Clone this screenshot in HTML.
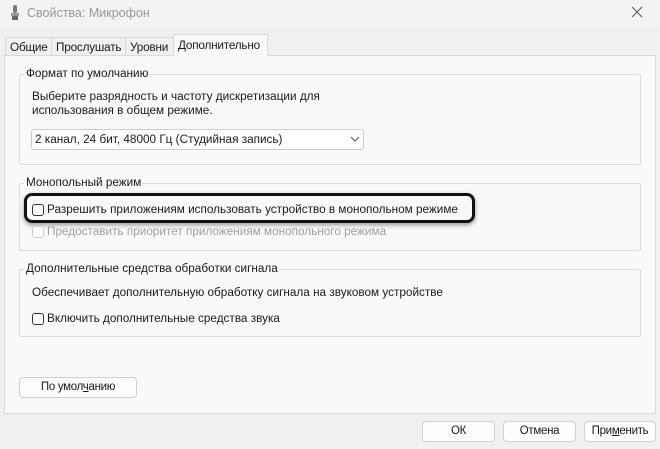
<!DOCTYPE html>
<html><head><meta charset="utf-8"><style>
*{box-sizing:border-box;margin:0;padding:0}
body{width:660px;height:449px;background:#f0f0f0;font-family:"Liberation Sans","DejaVu Sans",sans-serif;font-size:11.75px;color:#1a1a1a;position:relative;overflow:hidden}
.a{position:absolute;white-space:nowrap}
.title{left:0;top:0;width:660px;height:28px;background:#f3f3f3}
.tab{position:absolute;top:37px;height:19px;border:1px solid #d9d9d9;border-bottom:none;background:#f0f0f0;padding:3px 0 0 4px;letter-spacing:-0.2px;overflow:hidden}
.panel{left:4px;top:55px;width:652px;height:359px;background:#f9f9f9;border:1px solid #d9d9d9}
.grp{position:absolute;border:1px solid #dcdcdc;border-radius:2px}
.lg{position:absolute;top:-8px;left:4px;background:#f9f9f9;padding:0 2px}
.cb{position:absolute;width:12px;height:12px;border:1px solid #333;border-radius:3px;background:#fff}
.btn{position:absolute;height:21px;background:#fdfdfd;border:1px solid #d0d0d0;border-radius:4px;text-align:center;line-height:19px;font-size:11.5px;letter-spacing:-0.3px}
</style></head><body>
<div class="a title"></div>
<svg class="a" style="left:10px;top:5px" width="10" height="16"><rect x="3" y="0" width="4" height="8" rx="2" fill="#777"/><rect x="1" y="8" width="8" height="3" fill="#999"/><rect x="2" y="11" width="6" height="4" fill="#666"/></svg>
<div class="a" style="left:27px;top:6px;color:#999;font-size:12.5px">Свойства: Микрофон</div>
<svg class="a" style="left:631px;top:6px" width="12" height="12"><path d="M1 1L11 11M11 1L1 11" stroke="#555" stroke-width="1"/></svg>
<div class="tab" style="left:5px;width:47px">Общие</div>
<div class="tab" style="left:51px;width:75px">Прослушать</div>
<div class="tab" style="left:125px;width:49px">Уровни</div>
<div class="a panel"></div>
<div class="tab" style="left:173px;top:34px;height:23px;width:95px;background:#f9f9f9;padding-top:4px">Дополнительно</div>

<div class="grp" style="left:19px;top:74px;width:622px;height:91px"><span class="lg">Формат по умолчанию</span></div>
<div class="a" style="left:32px;top:90px;line-height:14px">Выберите разрядность и частоту дискретизации для<br>использования в общем режиме.</div>
<div class="a" style="left:31px;top:129px;width:333px;height:21px;background:#fff;border:1px solid #ccc;border-radius:3px;padding:3px 0 0 3px">2 канал, 24 бит, 48000 Гц (Студийная запись)</div>
<svg class="a" style="left:350px;top:136px" width="10" height="6"><path d="M1 1L5 5L9 1" stroke="#555" fill="none"/></svg>

<div class="grp" style="left:19px;top:183px;width:622px;height:68px"><span class="lg">Монопольный режим</span></div>
<div class="a" style="left:24px;top:193px;width:451px;height:30px;border:3px solid #111;border-radius:8px;box-shadow:0 2px 5px rgba(0,0,0,.4)"></div>
<div class="cb" style="left:32px;top:204px"></div>
<div class="a" style="left:47px;top:203px">Разрешить приложениям использовать устройство в монопольном режиме</div>
<div class="cb" style="left:32px;top:226px;border-color:#ccc"></div>
<div class="a" style="left:47px;top:225px;color:#a0a0a0">Предоставить приоритет приложениям монопольного режима</div>

<div class="grp" style="left:19px;top:269px;width:622px;height:68px"><span class="lg">Дополнительные средства обработки сигнала</span></div>
<div class="a" style="left:32px;top:286px">Обеспечивает дополнительную обработку сигнала на звуковом устройстве</div>
<div class="cb" style="left:32px;top:313px"></div>
<div class="a" style="left:47px;top:312px">Включить дополнительные средства звука</div>

<div class="btn" style="left:19px;top:377px;width:118px">По умол<u>ч</u>анию</div>
<div class="btn" style="left:422px;top:421px;width:73px">ОК</div>
<div class="btn" style="left:503px;top:421px;width:73px">Отмена</div>
<div class="btn" style="left:584px;top:421px;width:72px">При<u>м</u>енить</div>
</body></html>
